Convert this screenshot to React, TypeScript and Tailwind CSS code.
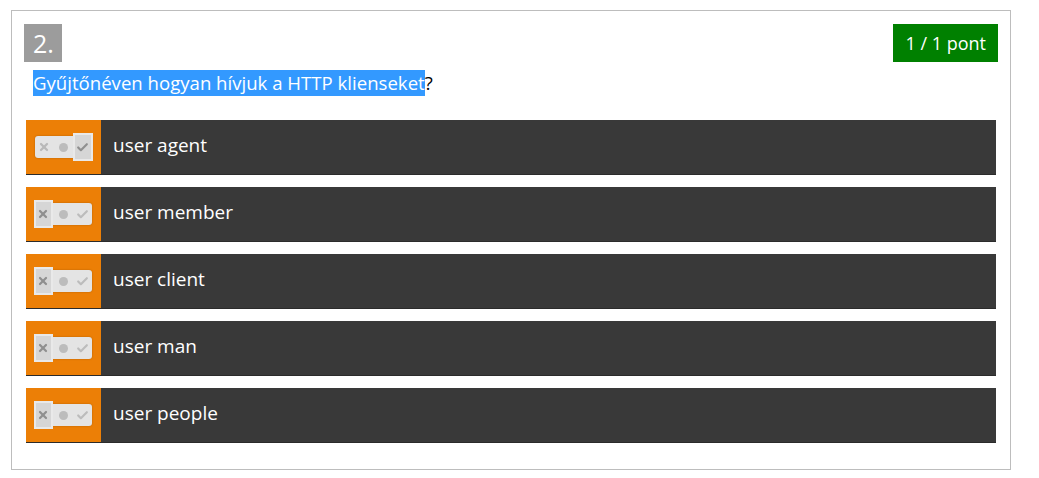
import { Check, X } from "lucide-react";

interface Answer {
    id: number;
    text: string;
    state: "yes" | "no";
}

const answers: Answer[] = [
    { id: 1, text: "user agent", state: "yes" },
    { id: 2, text: "user member", state: "no" },
    { id: 3, text: "user client", state: "no" },
    { id: 4, text: "user man", state: "no" },
    { id: 5, text: "user people", state: "no" },
];

function Toggle({ state }: { state: "yes" | "no" }) {
    return (
        <div className="relative flex items-center h-[22px] w-[57px] rounded-[3px] bg-[#e4e4e4] shadow-[0_0_2px_rgba(0,0,0,0.25)]">
            <div className="flex-1 flex justify-center">
                <X size={12} strokeWidth={4.5} className="text-[#b9b9b9]" />
            </div>
            <div className="flex-1 flex justify-center">
                <div className="w-[9px] h-[9px] rounded-full bg-[#bcbcbc]" />
            </div>
            <div className="flex-1 flex justify-center">
                <Check size={13} strokeWidth={4} className="text-[#bcbcbc]" />
            </div>
            {state === "yes" ? (
                <div className="absolute right-[-1px] top-[-3px] w-[20px] h-[28px] border-2 border-[#e9e9e9] bg-[#d6d6d6] flex items-center justify-center">
                    <Check size={13} strokeWidth={4} className="text-[#8f8f8f]" />
                </div>
            ) : (
                <div className="absolute left-[-1px] top-[-3px] w-[19px] h-[28px] border-2 border-[#e9e9e9] bg-[#d6d6d6] flex items-center justify-center">
                    <X size={12} strokeWidth={4.5} className="text-[#8f8f8f]" />
                </div>
            )}
        </div>
    );
}

export default function App() {
    return (
        <div className="bg-white w-[1039px] h-[478px] pt-[10px] pl-[11px]" style={{ fontFamily: "'Open Sans', sans-serif" }}>
            <div className="w-[1000px] h-[460px] border border-[#bdbdbd] px-[14px] pt-[13px]">
                <div className="flex justify-between items-start -mx-[2px]">
                    <div className="w-[38px] h-[38px] bg-[#9c9c9c] text-white text-[25px] leading-[38px] pl-[9px]">2.</div>
                    <div className="h-[38px] px-[12px] bg-[#008000] text-white text-[18px] leading-[38px]">1 / 1 pont</div>
                </div>
                <p className="mt-[8px] ml-[7px] text-[18.6px] leading-[26px] text-black">
                    <span className="inline-block bg-[#3399ff] text-white">Gyűjtőnéven hogyan hívjuk a HTTP klienseket</span>?
                </p>
                <div className="mt-[24px] flex flex-col gap-[12px]">
                    {answers.map((a) => (
                        <div key={a.id} className="flex h-[55px] bg-[#393939] border-b border-[#2b2b2b]">
                            <div className="w-[75px] bg-[#ec7f06] flex items-center justify-center pl-[1px] pr-[2px]">
                                <Toggle state={a.state} />
                            </div>
                            <div className="flex items-center pl-[12px] pb-[3px] text-white text-[19px]">{a.text}</div>
                        </div>
                    ))}
                </div>
            </div>
        </div>
    );
}
